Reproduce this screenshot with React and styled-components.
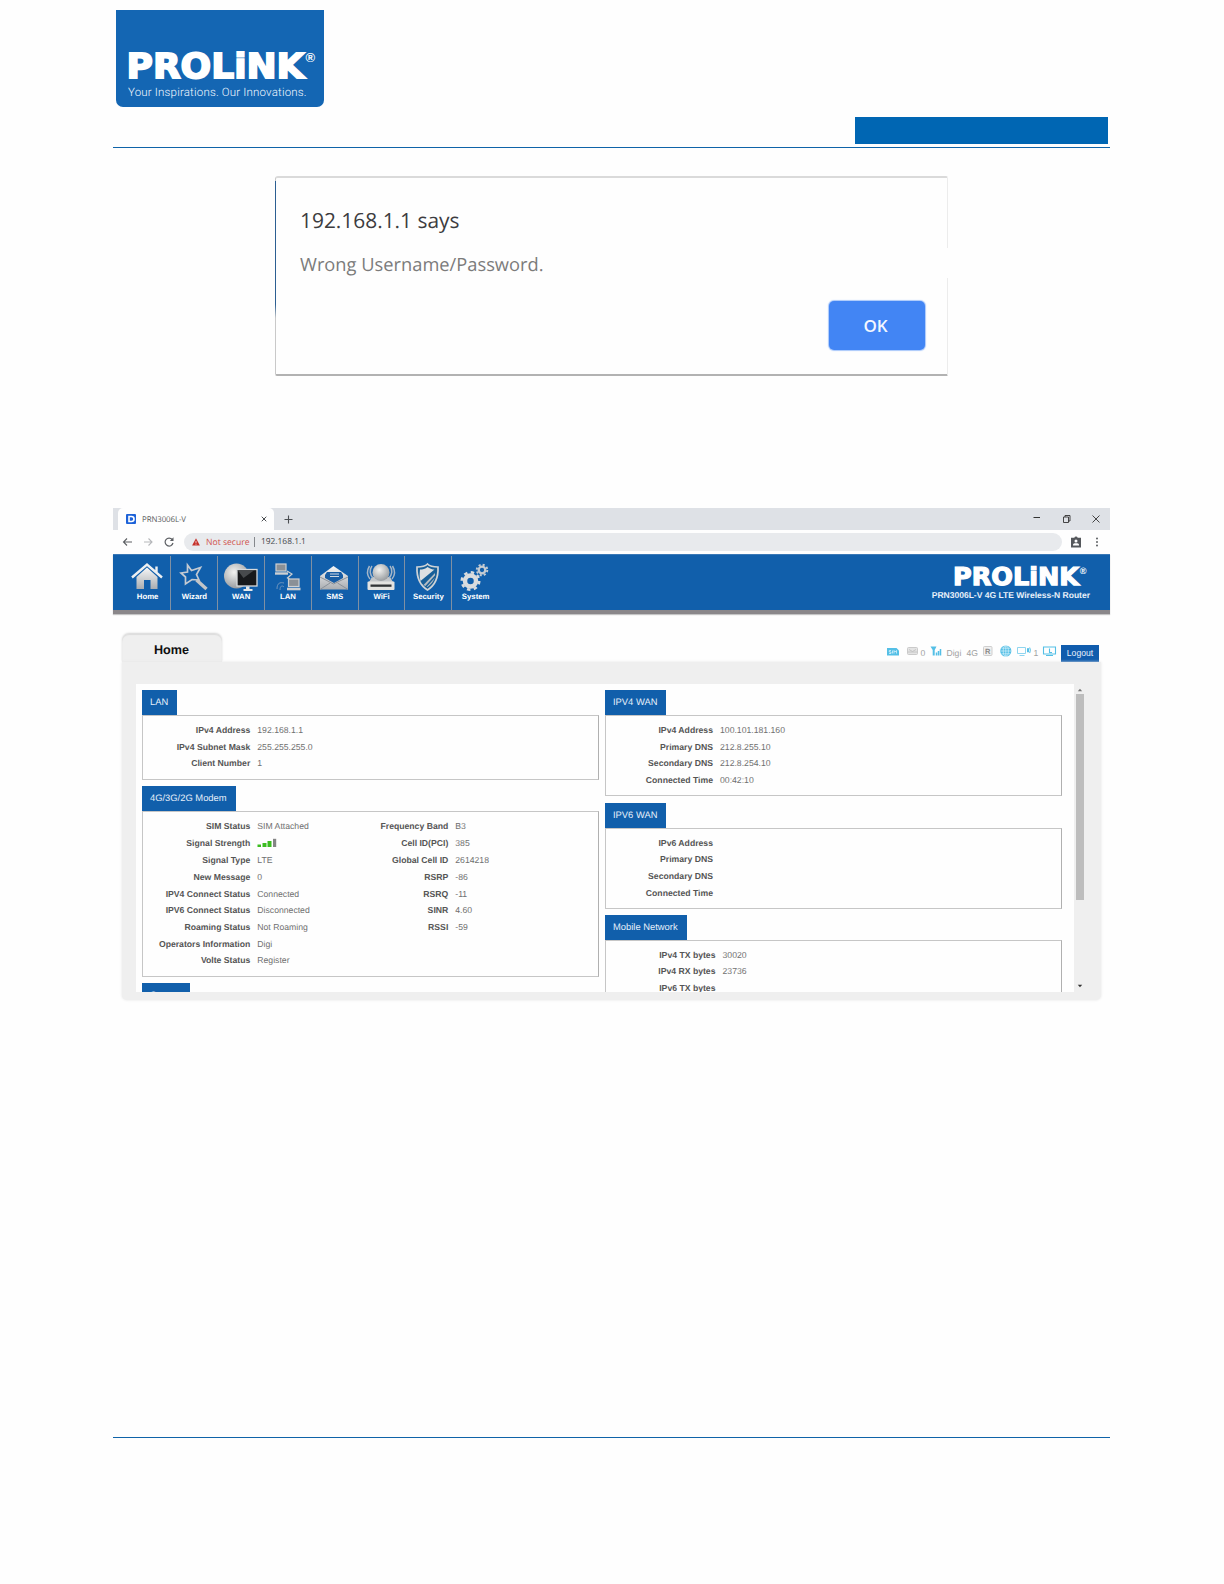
import React from 'react';
import styled, { createGlobalStyle } from 'styled-components';

const arial = '"Liberation Sans", Arial, sans-serif';
const chromeFont = '"Open Sans", "Noto Sans", sans-serif';
const brandBlue = '#115fab';

const GlobalStyle = createGlobalStyle`
  *, *::before, *::after { box-sizing: border-box; }
  body { margin: 0; background: #fefefe; font-family: ${arial}; text-rendering: geometricPrecision; }
  svg { display: block; flex: none; overflow: visible; }
`;

const Page = styled.main`
  width: 1224px;
  height: 1584px;
  padding: 10px 114px 0 113px;
  display: flex;
  flex-direction: column;
  background: #fefefe;
  overflow: hidden;
`;

const Masthead = styled.header`
  height: 138px;
  display: flex;
  justify-content: space-between;
  align-items: flex-start;
  padding: 0 2px 0 3px;
  border-bottom: 1px solid #0f63a8;
`;

const BrandCard = styled.div`
  width: 208px;
  height: 97px;
  padding: 35px 0 0 12px;
  border-radius: 0 0 7px 7px;
  background: #1466b3;
`;

const Tagline = styled.div`
  margin-top: 2px;
  font: 300 11.5px/15px Roboto, sans-serif;
  letter-spacing: 0.18px;
  color: #f2f8ff;
  white-space: nowrap;
`;

const ChapterBar = styled.div`
  width: 253px;
  height: 27px;
  margin-top: 107px;
  background: #0066b3;
`;

const Dialog = styled.section`
  width: 673px;
  height: 200px;
  margin: 28px 0 0 162px;
  padding: 29px 22px 0 25px;
  border: 1px solid #c9c9c9;
  border-top: 2px solid #dadada;
  border-bottom: 2px solid #b2b2b2;
  border-right-color: #ececec;
  border-radius: 3px 2px 1px 2px;
  display: flex;
  flex-direction: column;
  position: relative;
  font-family: ${chromeFont};

  &::before {
    content: '';
    position: absolute;
    left: -1px;
    top: 3px;
    width: 1px;
    height: 137px;
    background: linear-gradient(#2c5f92 90%, #c9c9c9);
  }
  &::after {
    content: '';
    position: absolute;
    right: -1px;
    top: 70px;
    width: 1px;
    height: 30px;
    background: #fefefe;
  }
`;

const DialogTitle = styled.div`
  margin-left: -1px;
  font-size: 20.9px;
  line-height: 28px;
  color: #3c3c3e;
`;

const DialogText = styled.div`
  margin-top: 16.5px;
  margin-left: -1px;
  font-size: 18.3px;
  line-height: 26px;
  color: #7b7b7b;
`;

const OkButton = styled.button`
  align-self: flex-end;
  width: 96px;
  height: 49px;
  margin-top: 23px;
  border: 0;
  border-radius: 5px;
  background: #4285f4;
  box-shadow: 0 0 1px 1px #a9c8fb;
  color: #f3f7ff;
  font: 600 17px/49px ${chromeFont};
  padding: 0 3px 0 0;
`;

const Browser = styled.section`
  width: 997px;
  height: 498px;
  margin-top: 132px;
  display: flex;
  flex-direction: column;
`;

const TabStrip = styled.div`
  height: 22px;
  display: flex;
  align-items: stretch;
  padding-left: 5px;
  background: #dee1e6;
  font-family: ${chromeFont};
`;

const BrowserTab = styled.div`
  width: 156px;
  display: flex;
  align-items: center;
  gap: 6px;
  padding: 0 7px 0 8px;
  border-radius: 5px 5px 0 0;
  background: #fefefe;
  font-size: 7.9px;
  letter-spacing: -0.1px;
  color: #5a5c60;
`;

const TabTitle = styled.span`
  flex: 1;
  padding-top: 1px;
`;

const WindowControls = styled.div`
  margin-left: auto;
  padding-right: 10px;
  display: flex;
  align-items: center;
  gap: 21.5px;
`;

const NewTab = styled.div`
  padding-left: 10px;
  display: flex;
  align-items: center;
`;

const AddressRow = styled.div`
  height: 24px;
  display: flex;
  align-items: center;
  padding: 0 9px 0 9px;
  font-family: ${chromeFont};
`;

const NavArrows = styled.div`
  width: 62px;
  display: flex;
  gap: 10px;
`;

const Omnibox = styled.div`
  flex: 1;
  height: 18px;
  display: flex;
  align-items: center;
  padding-left: 8px;
  border-radius: 9px;
  background: #e8eaed;
  font-size: 8.4px;
  line-height: 18px;
  color: #45484c;
`;

const OmniText = styled.span`
  padding-top: 0.5px;
`;

const NotSecure = styled(OmniText)`
  width: 48px;
  margin-left: 6px;
  font-size: 8.6px;
  color: #d0524c;
`;

const OmniDivider = styled.i`
  width: 1px;
  height: 10px;
  margin-right: 6px;
  background: #85888c;
`;

const AddressTools = styled.div`
  width: 39px;
  padding-left: 9px;
  display: flex;
  align-items: center;
  gap: 14px;
`;

const RouterHeader = styled.div`
  height: 60px;
  flex: none;
  display: flex;
  justify-content: space-between;
  padding: 1px 20px 0 11.7px;
  background: ${brandBlue};
  border-bottom: 4px solid #8a878a;
  border-top: 1px solid #3a78b6;
  box-shadow: 0 1px 1px #c4c4c4;
`;

const MainNav = styled.nav`
  display: flex;
`;

const NavItem = styled.a`
  width: 46.8px;
  display: flex;
  flex-direction: column;
  align-items: center;
  padding-top: 6px;
  border-right: ${(p) => (p.$last ? 0 : 1)}px solid #7f90a3;
  font: bold 7.8px/10px ${arial};
  color: #fff;
`;

const NavLabel = styled.span`
  margin-top: 1px;
`;

const RouterBrand = styled.div`
  display: flex;
  flex-direction: column;
  align-items: flex-end;
  padding-top: 6px;
`;

const ModelName = styled.div`
  margin-top: 1px;
  font: bold 8.52px/11px ${arial};
  color: #e9f1fa;
`;

const TabBar = styled.div`
  height: 48px;
  flex: none;
  display: flex;
  align-items: flex-end;
  padding: 0 11px 0 9px;
`;

const PageTab = styled.div`
  width: 100px;
  height: 28px;
  padding-left: 32px;
  border-radius: 7px 7px 0 0;
  background: #efefef;
  box-shadow: 0 -1px 2px #d4d4d4, inset 0 1px 1px #dcdcdc;
  font: bold 12.6px/33px ${arial};
  color: #101010;
`;

const StatusBar = styled.div`
  height: 17px;
  margin-left: auto;
  display: flex;
  align-items: center;
  font: 8.6px/17px ${arial};
  color: #a2a2a2;
`;

const StatusSlot = styled.span`
  width: ${(p) => p.$w}px;
  height: 17px;
`;

const Logout = styled.button`
  width: 38px;
  height: 17px;
  padding: 0;
  border: 0;
  background: #105cad;
  color: #e8f0fb;
  font: 8.6px/17px ${arial};
`;

const Panel = styled.div`
  height: 338px;
  flex: none;
  width: 979px;
  margin-left: 9px;
  padding: 22px 0 8px 14px;
  display: flex;
  border-radius: 0 0 5px 5px;
  background: #efefef;
  box-shadow: 0 0 3px #e4e4e4;
`;

const Viewport = styled.div`
  width: 938px;
  height: 308px;
  display: flex;
  gap: 6px;
  padding: 6px 0 0 6px;
  background: #fefefe;
  overflow: hidden;
`;

const Column = styled.div`
  width: 457px;
  display: flex;
  flex-direction: column;
`;

const Section = styled.section`
  flex: none;
  margin-bottom: ${(p) => p.$gap}px;
`;

const SectionTitle = styled.h2`
  width: ${(p) => p.$w}px;
  height: 25px;
  margin: 0;
  padding-left: 8px;
  background: ${brandBlue};
  color: #e6effa;
  font: 9.4px/23px ${arial};
`;

const SectionBody = styled.div`
  height: ${(p) => p.$h}px;
  display: flex;
  padding-top: 5.8px;
  border: 1px solid #c6c6c6;
  border-right-color: #b0b0b0;
`;

const Fields = styled.dl`
  width: ${(p) => p.$w}px;
  margin: 0;
`;

const Field = styled.div`
  height: ${(p) => p.$h || 16.67}px;
  display: grid;
  grid-template-columns: 1fr ${(p) => p.$valueW}px;
  column-gap: 7px;
  align-items: center;
  font: 8.67px/12px ${arial};
`;

const Term = styled.dt`
  text-align: right;
  font-weight: bold;
  color: #555;
`;

const Value = styled.dd`
  margin: 0;
  color: #707070;
`;

const Scrollbar = styled.div`
  width: 12px;
  height: 308px;
  display: flex;
  flex-direction: column;
  align-items: center;
  padding-top: 4px;
`;

const ScrollThumb = styled.div`
  width: 8px;
  height: 206px;
  margin: 2px 0 84px;
  background: #bdbdbd;
`;

const FooterRule = styled.hr`
  width: 997px;
  margin: 431px 0 0;
  border: 0;
  border-top: 1px solid #0f63a8;
`;

function Wordmark({ width }) {
  return (
    <svg width={width} height={width * (38 / 192)} viewBox="0 0 192 38" fill="#fff">
      <text x="-1.500" y="32.800" fontFamily="DejaVu Sans" fontWeight="700" fontSize="34.500" textLength="178"
        lengthAdjust="spacingAndGlyphs" stroke="#fff" strokeWidth="1.800">PROLiNK</text>
      <text x="177.500" y="17" fontFamily="Liberation Sans" fontWeight="700" fontSize="13">®</text>
    </svg>
  );
}

const Metal = () => (
  <defs>
    <linearGradient id="metal" x1="0" y1="0" x2="0" y2="1">
      <stop offset="0" stopColor="#f7f7f7" />
      <stop offset="1" stopColor="#a9adb1" />
    </linearGradient>
    <radialGradient id="globe" cx=".4" cy=".35" r=".7">
      <stop offset="0" stopColor="#f2f2f0" />
      <stop offset="1" stopColor="#93979b" />
    </radialGradient>
  </defs>
);

const navIcons = {
  Home: (
    <g transform="translate(-1 0)">
      <path d="M6.500 15 17 5.500 27.500 15V27H20.500V18H14V27H6.500Z" fill="url(#metal)" />
      <path d="M2 15.500 17 2.500 32 15.500M26.500 4.500V10" fill="none" stroke="#edf0f2" strokeWidth="2.400" />
    </g>
  ),
  Wizard: (
    <g fill="none">
      <path d="M10.500 3 14.500 8.500 23.500 5.500 19.500 12.500 22 18 15 17.500 8.500 22 8.500 15 4 11 10.500 10Z" stroke="#c3cad2" strokeWidth="1.700" />
      <path d="M19.500 18 29.500 27" stroke="#c2c5c8" strokeWidth="3.400" />
    </g>
  ),
  WAN: (
    <g transform="translate(-.5 0)">
      <circle cx="13" cy="14" r="12.500" fill="url(#globe)" />
      <rect x="13.500" y="7.500" width="20" height="16.500" fill="#17191b" stroke="#d7dadc" strokeWidth="1.300" />
      <path d="M14 8H31L20 16Z" fill="#474a4c" />
      <path d="M22.500 24.500H26V27H29V29H20V27H22.500Z" fill="#e5e8ea" />
    </g>
  ),
  LAN: (
    <g stroke="#cdd0d2" strokeWidth="1.200" transform="translate(-.5 0)">
      <rect x="5.500" y="2" width="10" height="7" fill="#8a9096" />
      <path d="M4.500 11.500H17.500" strokeWidth="2.400" />
      <path d="M16.500 9 21.500 12 17 16 21 18.500" fill="none" />
      <rect x="18" y="17" width="10.500" height="7.500" fill="#8a9096" />
      <path d="M16.500 27H30" strokeWidth="2.600" />
      <path d="M6.500 27C6.500 21 9.500 20 13.500 21M9.500 28C9.500 24 11.500 23 13.500 25" fill="none" stroke="#6f94bd" strokeWidth="1" />
    </g>
  ),
  SMS: (
    <g transform="translate(-1 0)">
      <path d="M3 14 16.500 4 31 14V27.500H3Z" fill="url(#metal)" />
      <path d="M8 13 10 10H24L26 13V16L17 21 8 16Z" fill="#185da4" />
      <path d="M13 12H22M13 14.500H22" stroke="#cfd8e1" strokeWidth="1.200" />
      <path d="M3 15 16.500 22 31 15M3 27.500 13 21M31 27.500 20.500 21" stroke="#8b929a" fill="none" />
    </g>
  ),
  WiFi: (
    <g transform="translate(-1 0)">
      <path d="M5 20 8 15H26L29 20Z" fill="#c4c7ca" />
      <circle cx="17" cy="10.500" r="8.500" fill="url(#globe)" />
      <path d="M8 4C5 8 6 13 9 16M5.500 4C2.500 9 3.500 14 6 17M26 4C29 8 28 13 25 16M28.500 4C31.500 9 30.500 14 28 17" fill="none" stroke="#a5b6c8" strokeWidth="1.500" />
      <rect x="3.500" y="19.500" width="27" height="8.500" rx="1" fill="#e3e3e1" />
      <rect x="6.500" y="22.500" width="21" height="2.300" fill="#303336" />
    </g>
  ),
  Security: (
    <g transform="translate(-.5 0)">
      <path d="M17 2C20 5 24 5 27.500 5 28 16 25 23 17 28 9 23 6 16 6.500 5 10 5 14 5 17 2Z" fill="#196099" stroke="#ced3d7" strokeWidth="1.700" />
      <path d="M17 5C20 7 22 7.500 24 7.500L10 19C9 16 9 12 9.500 7.500 12 7.500 15 7 17 5Z" fill="#dde0e2" />
      <path d="M24.500 11 13 23 17 25C22 21 25 17 24.500 11Z" fill="#b6bcc2" />
      <path d="M25 9 11.500 21.500M25 14 15 25" stroke="#196099" strokeWidth="1.500" />
    </g>
  ),
  System: (
    <g fill="none" transform="translate(-1.500 0)">
      <circle cx="13" cy="19" r="5.500" stroke="#d9dcde" strokeWidth="4.500" />
      <circle cx="13" cy="19" r="8.700" stroke="#d9dcde" strokeWidth="2.600" strokeDasharray="3.400 3.433" />
      <circle cx="24.500" cy="8" r="3.300" stroke="#c4cbd2" strokeWidth="2.300" />
      <circle cx="24.500" cy="8" r="5.300" stroke="#c4cbd2" strokeWidth="1.900" strokeDasharray="2.100 2.063" />
    </g>
  ),
};

const sky = '#54bfe6';

const SimIcon = () => (
  <svg width="12" height="14" viewBox="0 0 12 14">
    <path d="M0 3H9.500L12 5.500V10.500H0Z" fill={sky} />
    <path d="M4 5.500H2.300V7H4V8.500H2M5.500 5.500V8.500M7 8.500V5.500L8.200 7 9.500 5.500V8.500" stroke="#e9f8fd" strokeWidth=".7" fill="none" />
  </svg>
);

const MailIcon = () => (
  <svg width="11" height="14" viewBox="0 0 11 14">
    <rect x=".5" y="2.500" width="10" height="7" rx="1" fill="#e4e4e4" stroke="#cacaca" />
    <path d="M2 4.500 5.500 6.500 9 4.500M1 7H10" stroke="#bcbcbc" strokeWidth=".8" fill="none" />
  </svg>
);

const AntennaIcon = () => (
  <svg width="11" height="14" viewBox="0 0 11 14">
    <path d="M-.5 1.500H5.500L3.700 5V10.500H1.700V5Z" fill={sky} />
    <path d="M5.500 7.500V10.500M7.500 6V10.500M9.500 4V10.500" stroke={sky} strokeWidth="1.500" />
  </svg>
);

const RoamingIcon = () => (
  <svg width="10" height="14" viewBox="0 0 10 14">
    <rect x=".5" y="1.500" width="8.500" height="9" rx="1" fill="#f0f0f0" stroke="#cecece" />
    <text x="2" y="8.800" fontFamily="Liberation Sans" fontWeight="700" fontSize="7.500" fill="#8a8a8a">R</text>
  </svg>
);

const GlobeIcon = () => (
  <svg width="12" height="14" viewBox="0 0 12 14" fill="none" stroke="#e8f8fd" strokeWidth=".6">
    <circle cx="5.800" cy="6" r="5.600" fill={sky} stroke="none" />
    <ellipse cx="5.800" cy="6" rx="2.600" ry="5.200" />
    <path d="M.5 6H11M5.800 .5V11.500M1.500 3.200H10M1.500 8.800H10" />
  </svg>
);

const LanClientIcon = () => (
  <svg width="14" height="14" viewBox="0 0 14 14" fill="none" stroke="#8fd5ef">
    <path d="M.5 2.500H8.500V8.500H.5ZM2.500 10.500H7.500" />
    <path d="M10.500 3.500H11.500V7H10.500Z" stroke={sky} fill={sky} />
    <path d="M12.700 2.500Q14 5 12.700 8" stroke={sky} />
  </svg>
);

const DownloadIcon = () => (
  <svg width="13" height="14" viewBox="0 0 13 14" fill="none" stroke={sky}>
    <path d="M.5 2H12.500V9H.5ZM3 10.500H10" strokeWidth="1.100" />
    <path d="M6.500 3.500V7.500H9" strokeWidth="1.100" />
  </svg>
);

const SignalBars = () => (
  <svg width="21" height="10" viewBox="0 0 21 10">
    <path d="M.5 6.500H4V9H.5ZM5.500 5H9.500V9H5.500ZM10.500 3H14.500V9H10.500Z" fill="#3bbd20" />
    <path d="M16 .8H19.200V9H16Z" fill="#858585" />
  </svg>
);

const Arrow = ({ flip, faint }) => (
  <svg width="11" height="10" viewBox="0 0 11 10" fill="none" stroke={faint ? '#b5b7ba' : '#5c5f63'} strokeWidth="1.100">
    {flip ? <path d="M1 5H9M5.500 1.500 9 5 5.500 8.500" /> : <path d="M10 5H1.500M5 1.500 1.500 5 5 8.500" />}
  </svg>
);

const ScrollArrow = ({ down }) => (
  <svg width="6" height="4" viewBox="0 0 6 4">
    <path d={down ? 'M.8 .8H5.200L3 3.200Z' : 'M.8 3.200H5.200L3 .8Z'} fill={down ? '#333' : '#777'} />
  </svg>
);

function FieldList({ rows, width, valueWidth }) {
  return (
    <Fields $w={width}>
      {rows.map(([label, value, height]) => (
        <Field key={label} $valueW={valueWidth} $h={height}>
          <Term>{label}</Term>
          <Value>{value}</Value>
        </Field>
      ))}
    </Fields>
  );
}

function InfoSection({ title, titleWidth, height, gap = 6, children }) {
  return (
    <Section $gap={gap}>
      <SectionTitle $w={titleWidth}>{title}</SectionTitle>
      <SectionBody $h={height}>{children}</SectionBody>
    </Section>
  );
}

const lanRows = [
  ['IPv4 Address', '192.168.1.1'],
  ['IPv4 Subnet Mask', '255.255.255.0'],
  ['Client Number', '1'],
];
const modemRows = [
  ['SIM Status', 'SIM Attached', 17],
  ['Signal Strength', <SignalBars key="bars" />, 17.2],
  ['Signal Type', 'LTE', 17.2],
  ['New Message', '0'],
  ['IPV4 Connect Status', 'Connected'],
  ['IPV6 Connect Status', 'Disconnected'],
  ['Roaming Status', 'Not Roaming'],
  ['Operators Information', 'Digi'],
  ['Volte Status', 'Register'],
];
const cellRows = [
  ['Frequency Band', 'B3', 17],
  ['Cell ID(PCI)', '385', 17.2],
  ['Global Cell ID', '2614218', 17.2],
  ['RSRP', '-86'],
  ['RSRQ', '-11'],
  ['SINR', '4.60'],
  ['RSSI', '-59'],
];
const wan4Rows = [
  ['IPv4 Address', '100.101.181.160'],
  ['Primary DNS', '212.8.255.10'],
  ['Secondary DNS', '212.8.254.10'],
  ['Connected Time', '00:42:10'],
];
const wan6Rows = [
  ['IPv6 Address', ''],
  ['Primary DNS', ''],
  ['Secondary DNS', ''],
  ['Connected Time', ''],
];
const mobileRows = [
  ['IPv4 TX bytes', '30020'],
  ['IPv4 RX bytes', '23736'],
  ['IPv6 TX bytes', ''],
];

export default function App() {
  return (
    <Page>
      <GlobalStyle />
      <Masthead>
        <BrandCard>
          <Wordmark width={192} />
          <Tagline>Your Inspirations. Our Innovations.</Tagline>
        </BrandCard>
        <ChapterBar />
      </Masthead>

      <Dialog>
        <DialogTitle>192.168.1.1 says</DialogTitle>
        <DialogText>Wrong Username/Password.</DialogText>
        <OkButton>OK</OkButton>
      </Dialog>

      <Browser>
        <TabStrip>
          <BrowserTab>
            <svg width="10" height="10" viewBox="0 0 10 10">
              <rect width="10" height="10" rx="1" fill="#1d62d8" />
              <path d="M3 2.500H5.500A2.500 2.500 0 0 1 5.500 7.500H3Z" fill="none" stroke="#fff" strokeWidth="1.600" />
            </svg>
            <TabTitle>PRN3006L-V</TabTitle>
            <svg width="6" height="6" viewBox="0 0 6 6" stroke="#4b4e52" strokeWidth="1">
              <path d="M.7 .7 5.300 5.300M5.300 .7 .7 5.300" />
            </svg>
          </BrowserTab>
          <NewTab>
            <svg width="9" height="9" viewBox="0 0 9 9" stroke="#4b4e52" strokeWidth="1.100">
              <path d="M.5 4.500H8.500M4.500 .5V8.500" />
            </svg>
          </NewTab>
          <WindowControls>
            <svg width="8" height="8" viewBox="0 0 8 8" stroke="#333"><path d="M.5 2.500H7" /></svg>
            <svg width="8" height="8" viewBox="0 0 8 8" stroke="#333" fill="none" strokeWidth=".9">
              <path d="M.5 2H5.500V7.500H.5ZM2 2V.5H7V6H5.500" />
            </svg>
            <svg width="8" height="8" viewBox="0 0 8 8" stroke="#333" strokeWidth=".9">
              <path d="M.5 .5 7.500 7.500M7.500 .5 .5 7.500" />
            </svg>
          </WindowControls>
        </TabStrip>
        <AddressRow>
          <NavArrows>
            <Arrow />
            <Arrow flip faint />
            <svg width="10" height="10" viewBox="0 0 10 10" fill="none" stroke="#5c5f63" strokeWidth="1.200">
              <path d="M8.200 2.500A4 4 0 1 0 9 6" />
              <path d="M9.500 .3V4H5.800Z" fill="#5c5f63" stroke="none" />
            </svg>
          </NavArrows>
          <Omnibox>
            <svg width="8" height="8" viewBox="0 0 8 8">
              <path d="M4 .3 7.900 7.500H.1Z" fill="#c5302a" />
              <path d="M4 2.800V5.200M4 5.800V6.700" stroke="#fff" strokeWidth=".7" />
            </svg>
            <NotSecure>Not secure</NotSecure>
            <OmniDivider />
            <OmniText>192.168.1.1</OmniText>
          </Omnibox>
          <AddressTools>
            <svg width="10" height="12" viewBox="0 0 10 12">
              <path d="M0 1.800H3.300A1.800 1.800 0 0 1 6.700 1.800H10V11.500H0Z" fill="#55585c" />
              <circle cx="5" cy="5" r="1.500" fill="#fff" />
              <path d="M2 9.500V8.500C2 6.800 8 6.800 8 8.500V9.500Z" fill="#fff" />
            </svg>
            <svg width="3" height="10" viewBox="0 0 3 10" fill="#55585c">
              <circle cx="2" cy="1.500" r=".95" />
              <circle cx="2" cy="5" r=".95" />
              <circle cx="2" cy="8.500" r=".95" />
            </svg>
          </AddressTools>
        </AddressRow>

        <RouterHeader>
          <MainNav>
            {Object.entries(navIcons).map(([label, icon], i, all) => (
              <NavItem key={label} $last={i === all.length - 1}>
                <svg width="34" height="29" viewBox="0 0 34 29">
                  <Metal />
                  {icon}
                </svg>
                <NavLabel>{label}</NavLabel>
              </NavItem>
            ))}
          </MainNav>
          <RouterBrand>
            <Wordmark width={136} />
            <ModelName>PRN3006L-V 4G LTE Wireless-N Router</ModelName>
          </RouterBrand>
        </RouterHeader>

        <TabBar>
          <PageTab>Home</PageTab>
          <StatusBar>
            <StatusSlot $w={19.5}><SimIcon /></StatusSlot>
            <StatusSlot $w={14}><MailIcon /></StatusSlot>
            <StatusSlot $w={10}>0</StatusSlot>
            <StatusSlot $w={16}><AntennaIcon /></StatusSlot>
            <StatusSlot $w={20}>Digi</StatusSlot>
            <StatusSlot $w={16}>4G</StatusSlot>
            <StatusSlot $w={17}><RoamingIcon /></StatusSlot>
            <StatusSlot $w={17}><GlobeIcon /></StatusSlot>
            <StatusSlot $w={17}><LanClientIcon /></StatusSlot>
            <StatusSlot $w={9}>1</StatusSlot>
            <StatusSlot $w={18.5}><DownloadIcon /></StatusSlot>
            <Logout>Logout</Logout>
          </StatusBar>
        </TabBar>

        <Panel>
          <Viewport>
            <Column>
              <InfoSection title="LAN" titleWidth={34.5} height={64.5}>
                <FieldList rows={lanRows} width={212.3} valueWidth={98} />
              </InfoSection>
              <InfoSection title="4G/3G/2G Modem" titleWidth={94} height={166.5}>
                <FieldList rows={modemRows} width={212.3} valueWidth={98} />
                <FieldList rows={cellRows} width={181} valueWidth={81} />
              </InfoSection>
              <InfoSection title="System" titleWidth={47.5} height={60} />
            </Column>
            <Column>
              <InfoSection title="IPV4 WAN" titleWidth={61} height={81} gap={6.5}>
                <FieldList rows={wan4Rows} width={213} valueWidth={99} />
              </InfoSection>
              <InfoSection title="IPV6 WAN" titleWidth={61} height={81}>
                <FieldList rows={wan6Rows} width={213} valueWidth={99} />
              </InfoSection>
              <InfoSection title="Mobile Network" titleWidth={81.5} height={90}>
                <FieldList rows={mobileRows} width={212.5} valueWidth={96} />
              </InfoSection>
            </Column>
          </Viewport>
          <Scrollbar>
            <ScrollArrow />
            <ScrollThumb />
            <ScrollArrow down />
          </Scrollbar>
        </Panel>
      </Browser>
      <FooterRule />
    </Page>
  );
}
